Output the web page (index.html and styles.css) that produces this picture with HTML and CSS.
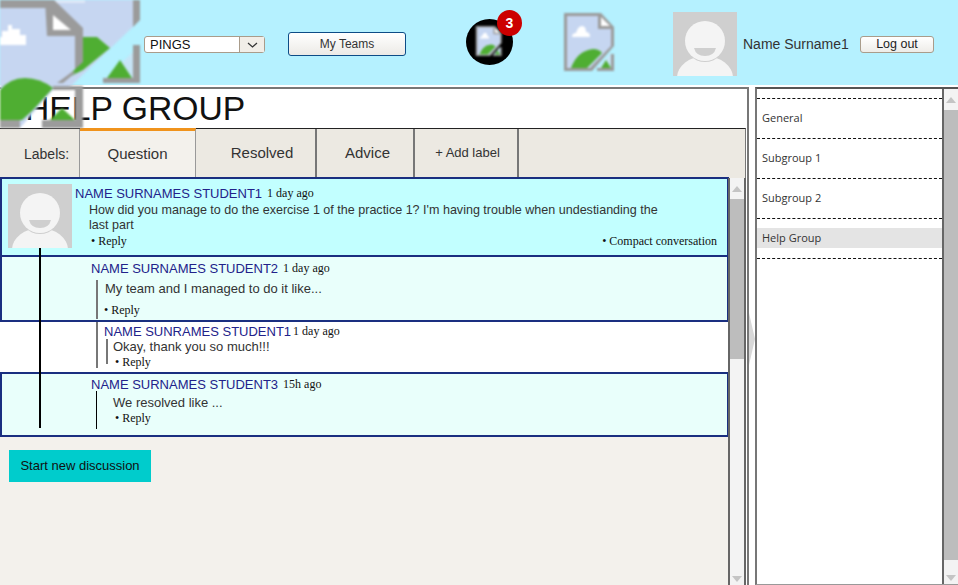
FILE: index.html
```html
<!DOCTYPE html>
<html lang="en">
<head>
<meta charset="utf-8">
<title>Help Group</title>
<link rel="stylesheet" href="styles.css">
</head>
<body>
<svg class="defs" width="0" height="0" aria-hidden="true">
  <symbol id="broken" viewBox="0 0 51 58">
    <polygon fill="#9b9b9b" points="0,0 37,0 50,14 50,33 28,58 0,58"/>
    <polygon fill="#c6d6f1" points="3,3 34,3 34,16 47,16 47,33 26,55 3,55"/>
    <polygon fill="#fff" points="37,4 46,13 37,13"/>
    <path fill="#fff" d="M8 24q0-4 4-4q2-7 6-7q4 0 4 6q4 0 4 5z"/>
    <path fill="#4fae32" d="M7 55q6-17 22-19q6 0 9 4l-15 15z"/>
    <polygon fill="#9b9b9b" points="47,41 50,41 50,58 33,58 33,55 47,55"/>
    <polygon fill="#c6e4f6" points="47,40 47,55 34,55"/>
    <polygon fill="#4fae32" points="37,55 42,47 47,55"/>
  </symbol>
  <symbol id="avatar" viewBox="0 0 64 64">
    <rect width="64" height="64" fill="#cfcfcf"/>
    <ellipse cx="32" cy="66" rx="28" ry="22" fill="#f4f4f4"/>
    <circle cx="32" cy="29" r="21" fill="#cfcfcf"/>
    <circle cx="32" cy="29" r="20" fill="#f4f4f4"/>
    <path fill="#cfcfcf" d="M21 36h22q-2 8-11 8t-11-8z"/>
  </symbol>
</svg>

<svg class="logo" width="140" height="128" viewBox="0 0 140 128" aria-hidden="true">
  <polygon fill="#c6d6f1" points="0,0 140,0 140,20 72,85 53,90 20,128 0,128"/>
  <polygon fill="#9b9b9b" points="0,0 47,0 47,8 0,8"/>
  <polygon fill="#9b9b9b" points="133,0 140,0 140,20 133,27"/>
  <rect x="55" y="0" width="30" height="3" fill="#dfe8f7"/>
  <polygon fill="#9b9b9b" points="45,0 54,0 83,28 83,36 47,36"/>
  <polygon fill="#fff" points="53,15 71,30 53,30"/>
  <rect x="75" y="36" width="8" height="34" fill="#9b9b9b"/>
  <path fill="#fff" d="M0 45h26v-10h-6v-6h-8v-4h-4v6h-6v6h-2z"/>
  <polygon fill="#4fae32" points="83,37 97,37 110,48 83,70 67,78 72,72 83,62"/>
  <polygon fill="#9b9b9b" points="72,72 76,72 63,83 57,83"/>
  <path fill="#4fae32" d="M0 90q10-12 25-12q15 0 28 10l-20 22l-11 10h-22z"/>
  <rect x="0" y="120" width="20" height="8" fill="#9f9f9f"/>
  <polygon fill="#9b9b9b" points="53,86 83,86 83,128 42,128 42,120 75,120 75,90 53,90"/>
  <polygon fill="#4fae32" points="50,120 62,108 75,120"/>
  <polygon fill="#9b9b9b" points="133,45 140,45 140,83 103,83 103,78 133,78"/>
  <polygon fill="#c6e4f6" points="133,52 133,78 106,78"/>
  <polygon fill="#4fae32" points="107,78 120,60 132,78"/>
</svg>

<header class="topbar">
  <div class="select"><span class="select-value">PINGS</span><span class="select-arrow"><svg width="11" height="6" viewBox="0 0 11 6"><path d="M1 1l4.500 4 4.500-4" fill="none" stroke="#333" stroke-width="1.200"/></svg></span></div>
  <button class="btn-teams">My Teams</button>
  <div class="notify">
    <svg class="notify-img soft" width="28" height="30"><use href="#broken"/></svg>
    <span class="badge">3</span>
  </div>
  <svg class="page-icon soft" width="51" height="58"><use href="#broken"/></svg>
  <svg class="user-avatar" width="64" height="64"><use href="#avatar"/></svg>
  <span class="user-name">Name Surname1</span>
  <button class="btn-logout">Log out</button>
</header>

<main class="layout">
  <section class="content">
    <h1 class="title">HELP GROUP</h1>
    <nav class="tabs">
      <span class="tab-label">Labels:</span>
      <a class="tab tab-active">Question</a>
      <a class="tab tab-resolved">Resolved</a>
      <a class="tab tab-advice">Advice</a>
      <a class="tab tab-add">+ Add label</a>
    </nav>
    <div class="panel">
      <div class="threads">
        <span class="thread-line"></span>
        <article class="post post-main">
          <svg class="post-avatar" width="64" height="64"><use href="#avatar"/></svg>
          <div class="post-main-body">
            <div class="head"><span class="name">NAME SURNAMES STUDENT1</span><span class="date">1 day ago</span></div>
            <p class="text text-main">How did you manage to do the exercise 1 of the practice 1? I'm having trouble when undestianding the last part</p>
            <div class="actions"><span class="link">• Reply</span><span class="link">• Compact conversation</span></div>
          </div>
        </article>
        <article class="post post-reply">
          <div class="head"><span class="name">NAME SURNAMES STUDENT2</span><span class="date">1 day ago</span></div>
          <div class="reply-body">
            <p class="text">My team and I managed to do it like...</p>
            <span class="link">• Reply</span>
          </div>
        </article>
        <article class="post-nested">
          <div class="nested-inner">
            <div class="head"><span class="name">NAME SUNRAMES STUDENT1</span><span class="date date-tight">1 day ago</span></div>
            <div class="nested-body">
              <p class="text">Okay, thank you so much!!!</p>
              <span class="link link-in">• Reply</span>
            </div>
          </div>
        </article>
        <article class="post post-reply post-last">
          <div class="head"><span class="name">NAME SURNAMES STUDENT3</span><span class="date">15h ago</span></div>
          <div class="last-body">
            <p class="text">We resolved like ...</p>
            <span class="link link-in">• Reply</span>
          </div>
        </article>
        <button class="btn-new">Start new discussion</button>
      </div>
      <div class="scroll scroll-left">
        <span class="arrow-up"></span>
        <span class="thumb thumb-left"></span>
        <span class="arrow-down"></span>
      </div>
    </div>
  </section>
  <svg class="handle" width="6" height="52" viewBox="0 0 6 52" aria-hidden="true"><polygon points="0,0 6,26 0,52" fill="#d8d8d8"/></svg>
  <aside class="sidebar">
    <ul class="groups">
      <li class="group">General</li>
      <li class="group">Subgroup 1</li>
      <li class="group">Subgroup 2</li>
      <li class="group group-active">Help Group</li>
    </ul>
    <div class="scroll scroll-right">
      <span class="arrow-up"></span>
      <span class="thumb thumb-right"></span>
      <span class="arrow-down"></span>
    </div>
  </aside>
</main>
</body>
</html>
```
FILE: styles.css
```css
* { box-sizing: border-box; }
html, body { margin: 0; height: 585px; overflow: hidden; }
body { background: #fff; font-family: "Liberation Sans", Arial, sans-serif; color: #222; position: relative; }
.defs { position: absolute; }
.soft { filter: blur(.8px); }
.logo { position: absolute; left: 0; top: 0; z-index: 5; filter: blur(.8px); }

.topbar { height: 85px; background: #b5f1ff; display: flex; align-items: center; padding-left: 144px; }
.select { width: 121px; height: 17px; margin-top: 4px; display: flex; background: #fff; border: 1px solid #a99c8b; border-radius: 3px; font-size: 13px; color: #111; }
.select-value { flex: 1; padding-left: 5px; line-height: 15px; }
.select-arrow { width: 25px; border-left: 1px solid #a99c8b; background: #f1eee8; display: flex; align-items: center; justify-content: center; }
.btn-teams { width: 118px; height: 24px; margin-left: 23px; margin-top: 3px; padding: 0; border: 1px solid #0d4c86; border-radius: 3px; background: linear-gradient(#fff, #eceae6); font: 12px "Liberation Sans", Arial, sans-serif; color: #333; }
.notify { width: 47px; height: 46px; margin-left: 60px; margin-top: -1px; position: relative; background: #000; border-radius: 50%; display: flex; align-items: center; justify-content: center; }
.notify-img { margin-top: -3px; margin-left: -2px; }
.badge { position: absolute; left: 31px; top: -9px; width: 25px; height: 26px; border-radius: 50%; background: #cc0000; color: #fff; font-size: 14px; font-weight: 700; line-height: 26px; text-align: center; }
.page-icon { margin-left: 51px; flex: none; margin-top: -1px; }
.user-avatar { margin-left: 58px; flex: none; margin-top: 3px; }
.user-name { margin-left: 6px; width: 105px; font-size: 14px; color: #333; white-space: nowrap; margin-top: 3px; }
.btn-logout { width: 74px; height: 17px; margin-left: 12px; margin-top: 4px; padding: 0; border: 1px solid #a99c8b; border-radius: 3px; background: linear-gradient(#fff, #eeece8); font: 12.500px/15px "Liberation Sans", Arial, sans-serif; color: #222; }

.layout { display: flex; height: 500px; padding-top: 2px; }
.content { width: 749px; flex: none; border-top: 2px solid #777; border-right: 2px solid #777; display: flex; flex-direction: column; min-height: 0; }
.title { margin: 0; height: 39px; padding-left: 25px; font-size: 33.700px; font-weight: 400; line-height: 38px; color: #111; }
.tabs { height: 50px; margin-right: 1px; flex: none; display: flex; background: #ece9e2; border-top: 1px solid #222; border-right: 1px solid #777; font-size: 15px; color: #333; }
.tab-label { width: 80px; padding-left: 24px; line-height: 50px; border-right: 1px solid #999; font-size: 14px; }
.tab { display: block; text-align: center; line-height: 48px; border-right: 2px solid #777; }
.tab-active { width: 116px; margin-top: -1px; background: #f3f1ec; border-top: 3px solid #f0931c; border-right: 1px solid #999; line-height: 46px; }
.tab-resolved { width: 121px; padding-left: 13px; }
.tab-advice { width: 98px; padding-left: 5px; }
.tab-add { width: 104px; padding-left: 3px; font-size: 13px; }

.panel { flex: 1; display: flex; background: #f3f1ec; min-height: 0; margin-right: 1px; }
.threads { width: 728px; flex: none; position: relative; }
.thread-line { position: absolute; left: 39px; top: 70px; width: 2px; height: 180px; background: #000; z-index: 2; }
.post { border: 2px solid #1a2f80; margin-right: -1px; }
.head { display: flex; align-items: baseline; white-space: nowrap; padding-top: 1px; margin-bottom: -1px; }
.name { font-size: 13px; line-height: 16px; color: #22228a; }
.date { font: 12px/14px "Liberation Serif", "Times New Roman", serif; color: #111; margin-left: 5px; position: relative; top: -1px; }
.date-tight { margin-left: 2px; }
.text { margin: 0; font-size: 13px; line-height: 15px; color: #333; }
.link { font: 12px/14px "Liberation Serif", "Times New Roman", serif; color: #111; }

.post-main { height: 80px; margin-top: -1px; background: #c2ffff; display: flex; padding: 5px 0 0 6px; }
.post-avatar { flex: none; }
.post-main-body { margin-left: 3px; padding-top: 1px; flex: 1; }
.text-main { margin: 2px 60px 0 14px; font-size: 12.550px; }
.actions { display: flex; justify-content: space-between; padding: 1px 10px 0 16px; }

.post-reply { height: 67px; margin-top: -2px; background: #e9fffb; padding: 3px 0 0 89px; }
.reply-body { margin: 4px 0 0 5px; height: 39px; border-left: 2px solid #777; padding: 1px 0 0 7px; }
.reply-body .link { display: block; margin-top: 7px; margin-left: -1px; }

.post-nested { height: 50px; padding-left: 96px; background: #fff; }
.nested-inner { height: 46px; border-left: 2px solid #777; padding: 1px 0 0 6px; }
.nested-body { margin: 4px 0 0 2px; height: 25px; border-left: 2px solid #777; padding-left: 5px; line-height: 0; }
.link-in { display: block; padding-left: 2px; margin-top: 1px; }
.nested-body .text { margin-top: -5px; display: block; }

.post-last { height: 65px; margin-top: 0; padding-top: 2px; }
.last-body { margin: -2px 0 0 5px; padding: 4px 0 0 16px; border-left: 1px solid #000; height: 38px; }

.btn-new { display: block; width: 142px; height: 32px; margin: 13px 0 0 9px; padding: 0 0 2px; border: 0; background: #00cccc; font: 13px "Liberation Sans", Arial, sans-serif; color: #111; }

.scroll { display: flex; flex-direction: column; align-items: center; position: relative; background: #f3f3f3; flex: none; }
.scroll-left { width: 18px; border-left: 2px solid #666; border-right: 2px solid #666; padding-top: 8px; }
.scroll-right { width: 16px; border-left: 2px solid #666; padding-top: 8px; }
.arrow-up { width: 0; height: 0; border: 5px solid transparent; border-top: 0; border-bottom: 6px solid #c4c4c4; }
.arrow-down { width: 0; height: 0; border: 5px solid transparent; border-bottom: 0; border-top: 6px solid #c4c4c4; margin-top: auto; margin-bottom: 3px; }
.thumb { align-self: stretch; background: #bdbdbd; }
.thumb-left { height: 160px; margin-top: 7px; }
.thumb-right { height: 450px; margin-top: 7px; }

.handle { flex: none; align-self: flex-start; margin-top: 226px; }
.sidebar { flex: 1; display: flex; min-width: 0; border-top: 2px solid #555; border-left: 2px solid #777; border-bottom: 1px solid #999; }
.groups { flex: 1; list-style: none; margin: 0; padding: 9px 0 0; font: 11px "Open Sans", sans-serif; color: #333; }
.group { height: 40px; padding: 0 0 0 5px; line-height: 37px; border-top: 1px dashed #111; }
.group:last-child { border-bottom: 1px dashed #111; height: 41px; }
.group-active { background: linear-gradient(#fff 9px, #e4e4e4 9px, #e4e4e4 29px, #fff 29px); }
```
